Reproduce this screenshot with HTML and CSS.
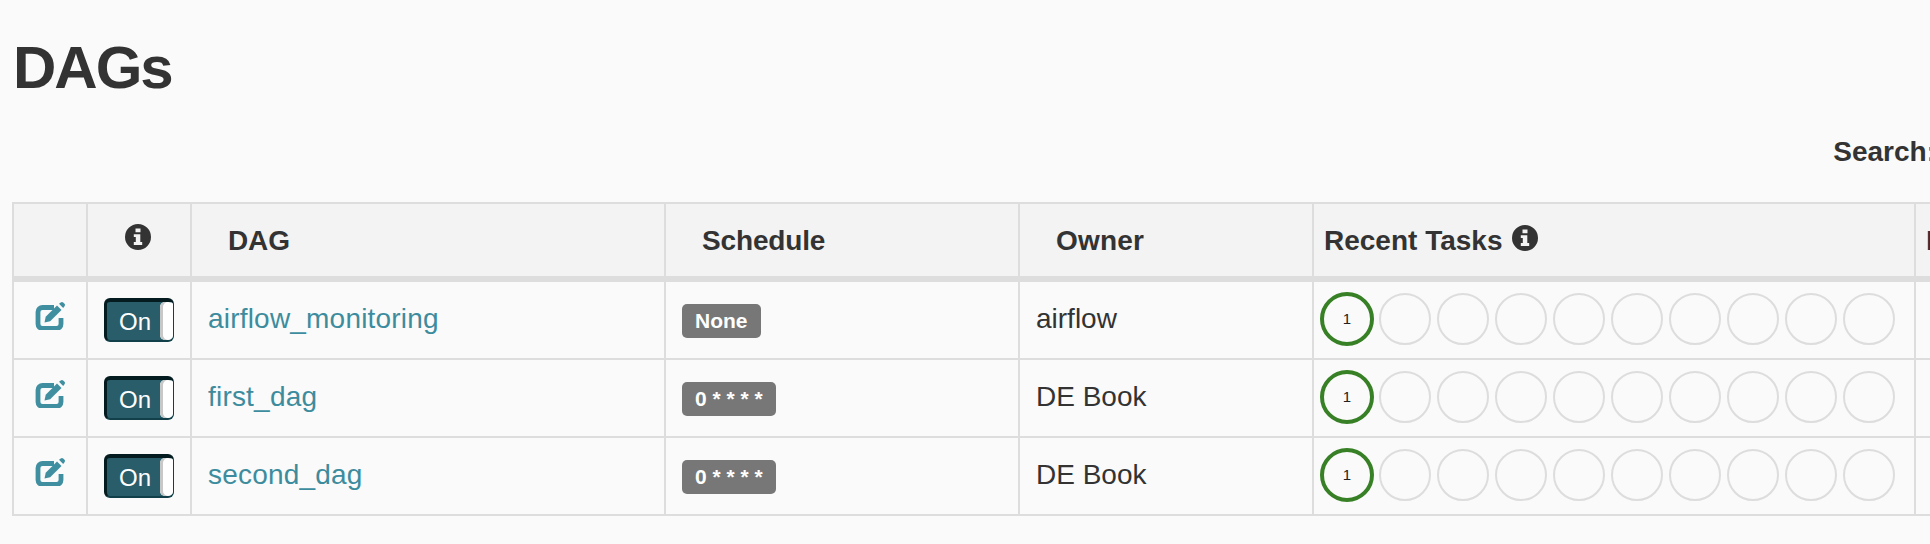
FILE: index.html
```html
<!DOCTYPE html>
<html lang="en">
<head>
<meta charset="utf-8">
<title>DAGs</title>
<link rel="stylesheet" href="styles.css">
</head>
<body>
<svg class="defs" width="0" height="0" aria-hidden="true">
  <defs>
    <symbol id="edit" viewBox="0 0 30 28">
      <path d="M19 5.500H7.500A4.500 4.500 0 0 0 3 10v12a4.500 4.500 0 0 0 4.500 4.500h14A4.500 4.500 0 0 0 26 22v-6" fill="none" stroke="currentColor" stroke-width="4.800"/>
      <path d="M9.500 20.500l1.200-5.700L22 3.500l4.500 4.500L15.200 19.300z" fill="currentColor"/>
      <path d="M24 1.800l1.700-1.300a2 2 0 0 1 2.500 0l1.300 1.300a2 2 0 0 1 0 2.500L28.200 6z" fill="currentColor"/>
    </symbol>
    <symbol id="info" viewBox="0 0 26 26">
      <path fill-rule="evenodd" fill="currentColor" d="M13 0a13 13 0 1 1 0 26a13 13 0 0 1 0-26zM10.500 4.500v3.800h5V4.500zM8.800 10.200v2.800h2v5h-2v3h8.400v-3h-1.900v-7.800z"/>
    </symbol>
  </defs>
</svg>
<main class="page">
  <h1 class="title">DAGs</h1>
  <div class="filter"><label class="filter-label">Search:</label><input class="filter-input" type="search"></div>
  <table class="dags">
    <colgroup>
      <col class="c-edit"><col class="c-toggle"><col class="c-dag"><col class="c-schedule"><col class="c-owner"><col class="c-tasks"><col class="c-last">
    </colgroup>
    <thead>
      <tr>
        <th></th>
        <th class="center"><svg class="info nudge"><use href="#info"/></svg></th>
        <th class="indent">DAG</th>
        <th class="indent">Schedule</th>
        <th class="indent owner">Owner</th>
        <th class="tight">Recent Tasks <svg class="info inline"><use href="#info"/></svg></th>
        <th class="tight">Last Run</th>
      </tr>
    </thead>
    <tbody>
      <tr>
        <td class="center"><a class="edit" href="#"><svg><use href="#edit"/></svg></a></td>
        <td class="center"><span class="toggle"><span class="toggle-on">On</span><span class="toggle-handle"></span></span></td>
        <td><a class="link" href="#">airflow_monitoring</a></td>
        <td><span class="badge">None</span></td>
        <td>airflow</td>
        <td class="tasks"><svg class="circles" viewBox="-5 0 590 60"><circle class="done" cx="22" cy="30" r="25"/><text x="22" y="35">1</text><circle class="none" cx="80" cy="30" r="25"/><circle class="none" cx="138" cy="30" r="25"/><circle class="none" cx="196" cy="30" r="25"/><circle class="none" cx="254" cy="30" r="25"/><circle class="none" cx="312" cy="30" r="25"/><circle class="none" cx="370" cy="30" r="25"/><circle class="none" cx="428" cy="30" r="25"/><circle class="none" cx="486" cy="30" r="25"/><circle class="none" cx="544" cy="30" r="25"/></svg></td>
        <td></td>
      </tr>
      <tr>
        <td class="center"><a class="edit" href="#"><svg><use href="#edit"/></svg></a></td>
        <td class="center"><span class="toggle"><span class="toggle-on">On</span><span class="toggle-handle"></span></span></td>
        <td><a class="link" href="#">first_dag</a></td>
        <td><span class="badge">0 * * * *</span></td>
        <td>DE Book</td>
        <td class="tasks"><svg class="circles" viewBox="-5 0 590 60"><circle class="done" cx="22" cy="30" r="25"/><text x="22" y="35">1</text><circle class="none" cx="80" cy="30" r="25"/><circle class="none" cx="138" cy="30" r="25"/><circle class="none" cx="196" cy="30" r="25"/><circle class="none" cx="254" cy="30" r="25"/><circle class="none" cx="312" cy="30" r="25"/><circle class="none" cx="370" cy="30" r="25"/><circle class="none" cx="428" cy="30" r="25"/><circle class="none" cx="486" cy="30" r="25"/><circle class="none" cx="544" cy="30" r="25"/></svg></td>
        <td></td>
      </tr>
      <tr>
        <td class="center"><a class="edit" href="#"><svg><use href="#edit"/></svg></a></td>
        <td class="center"><span class="toggle"><span class="toggle-on">On</span><span class="toggle-handle"></span></span></td>
        <td><a class="link" href="#">second_dag</a></td>
        <td><span class="badge">0 * * * *</span></td>
        <td>DE Book</td>
        <td class="tasks"><svg class="circles" viewBox="-5 0 590 60"><circle class="done" cx="22" cy="30" r="25"/><text x="22" y="35">1</text><circle class="none" cx="80" cy="30" r="25"/><circle class="none" cx="138" cy="30" r="25"/><circle class="none" cx="196" cy="30" r="25"/><circle class="none" cx="254" cy="30" r="25"/><circle class="none" cx="312" cy="30" r="25"/><circle class="none" cx="370" cy="30" r="25"/><circle class="none" cx="428" cy="30" r="25"/><circle class="none" cx="486" cy="30" r="25"/><circle class="none" cx="544" cy="30" r="25"/></svg></td>
        <td></td>
      </tr>
    </tbody>
  </table>
</main>
</body>
</html>
```
FILE: styles.css
```css
html, body {
  margin: 0;
  height: 100%;
  overflow: hidden;
  background: #fafafa;
}
body {
  font-family: "Liberation Sans", Arial, sans-serif;
  font-size: 28px;
  color: #333;
}
.defs {
  display: block;
  height: 0;
}
.page {
  width: 2215px;
  padding-left: 12px;
  box-sizing: border-box;
}
.title {
  margin: 0;
  padding: 35px 0 0 1px;
  height: 100px;
  box-sizing: border-box;
  font-size: 60px;
  line-height: 66px;
  font-weight: 700;
  letter-spacing: -2px;
}
.filter {
  display: flex;
  align-items: center;
  justify-content: flex-end;
  height: 102px;
  padding-top: 2px;
  box-sizing: border-box;
}
.filter-label {
  font-weight: 700;
}
.filter-input {
  width: 271px;
  height: 40px;
  margin-left: 8px;
  box-sizing: border-box;
}
.dags {
  table-layout: fixed;
  width: 2202px;
  border-collapse: collapse;
}
.c-edit { width: 74px; }
.c-toggle { width: 104px; }
.c-dag { width: 474px; }
.c-schedule { width: 354px; }
.c-owner { width: 294px; }
.c-tasks { width: 602px; }
.c-last { width: 300px; }
th, td {
  border: 2px solid #ddd;
  box-sizing: border-box;
  padding: 0 16px;
  text-align: left;
}
th {
  height: 76px;
  padding-top: 2px;
  background: #f3f3f3;
  border-bottom-width: 6px;
  font-weight: 700;
  letter-spacing: -0.15px;
}
td {
  height: 78px;
  padding-bottom: 2px;
}
tbody tr:first-child td {
  height: 80px;
}
th.indent {
  padding-left: 36px;
}
th.owner {
  letter-spacing: 0.2px;
}
th.tight {
  padding-left: 10px;
  letter-spacing: 0;
}
th.center, td.center {
  padding: 0;
  text-align: center;
}
.info {
  display: inline-block;
  width: 26px;
  height: 26px;
  vertical-align: middle;
  color: #333;
  position: relative;
  top: -5px;
}
.info.nudge {
  left: -1px;
}
.info.inline {
  margin-left: 2px;
}
.edit {
  display: block;
  width: 30px;
  height: 28px;
  margin: -9px auto 0;
  color: #3f8fa1;
}
.edit svg {
  display: block;
  width: 30px;
  height: 28px;
}
.toggle {
  display: inline-flex;
  width: 70px;
  height: 44px;
  box-sizing: border-box;
  border: 2px solid #12404a;
  border-top-width: 4px;
  border-left-width: 3px;
  border-right-width: 1px;
  border-top-color: #041c20;
  border-left-color: #041c20;
  border-radius: 6px;
  overflow: hidden;
  vertical-align: middle;
  background: #285d69;
}
.toggle-on {
  flex: 1;
  padding-left: 3px;
  color: #fff;
  font-size: 24px;
  line-height: 40px;
  text-align: center;
}
.toggle-handle {
  width: 13px;
  background: #fff;
  border-radius: 5px 0 0 5px;
  box-shadow: inset 3px 0 0 #c8c8c8;
  box-sizing: border-box;
}
.link {
  color: #3d8c9e;
  text-decoration: none;
  letter-spacing: 0.2px;
}
.badge {
  display: inline-block;
  height: 34px;
  padding: 0 13px;
  background: #777;
  color: #fff;
  border-radius: 5px;
  font-size: 21px;
  font-weight: 700;
  line-height: 34px;
  position: relative;
  top: 1px;
  white-space: nowrap;
}
td.tasks {
  padding: 0 0 2px;
}
.circles {
  display: block;
  width: 590px;
  height: 60px;
  margin-left: 6px;
}
.circles circle {
  fill: #fafafa;
}
.circles .done {
  stroke: #388026;
  stroke-width: 4px;
}
.circles .none {
  stroke: #ddd;
  stroke-width: 2px;
}
.circles text {
  font-size: 15px;
  fill: #222;
  text-anchor: middle;
}
```
